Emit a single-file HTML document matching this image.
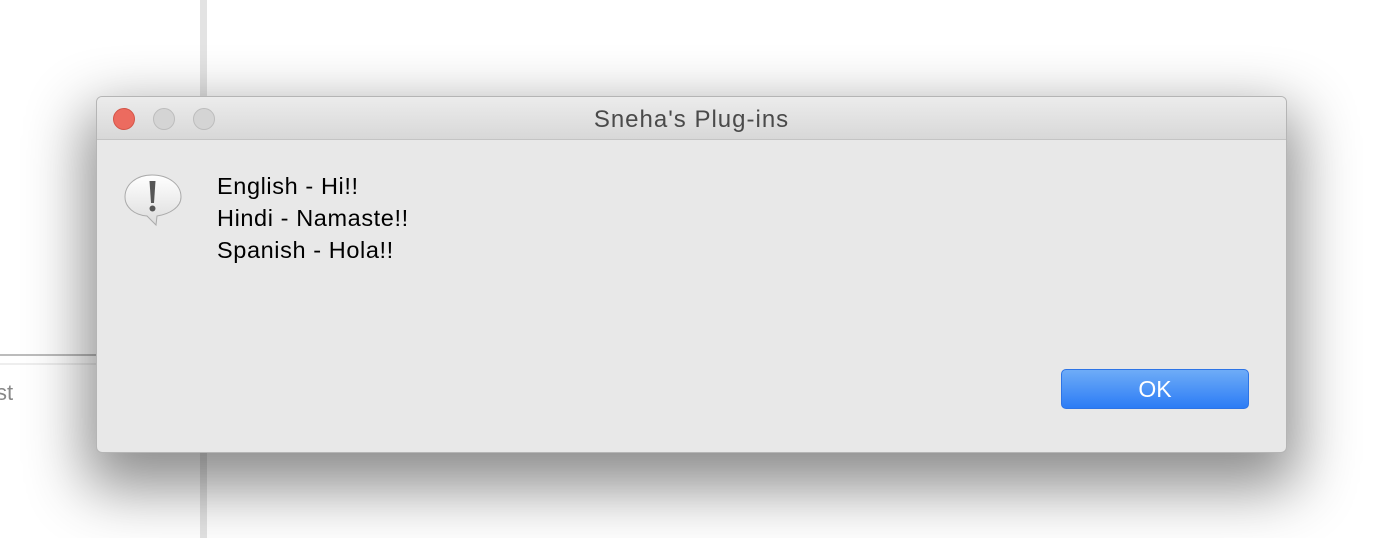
<!DOCTYPE html>
<html><head><style>
body{margin:0;width:1400px;height:538px;background:#fff;position:relative;overflow:hidden;font-family:"Liberation Sans",sans-serif}
.vl{position:absolute;left:200px;top:0;width:7px;height:538px;background:#e3e3e3}
.hl{position:absolute;left:0;top:354px;width:100px;height:2px;background:#bcbcbc}
.hl2{position:absolute;left:0;top:363px;width:100px;height:2px;background:#eee}
.st{position:absolute;left:-4px;top:380px;font-size:22px;color:#888}
.win{position:absolute;left:96px;top:96px;width:1189px;height:355px;background:#e8e8e8;border:1px solid #b5b5b5;border-radius:6px;box-shadow:0 25px 60px 10px rgba(0,0,0,.45);overflow:hidden}
.tb{height:42px;background:linear-gradient(#ececec,#d8d8d8);border-bottom:1px solid #c4c4c4;text-align:center;line-height:45px;font-size:24px;letter-spacing:1px;color:#4a4a4a}
.dot{position:absolute;top:11px;width:22px;height:22px;border-radius:50%;background:#d4d4d4;border:1px solid #bcbcbc;box-sizing:border-box}
.txt{position:absolute;left:120px;top:73px;font-size:23.5px;letter-spacing:.6px;line-height:32px;color:#000}
.ok{position:absolute;left:964px;top:272px;width:188px;height:40px;border-radius:5px;background:linear-gradient(#6eacf7,#2c7cf5);border:1px solid #2d74e6;box-sizing:border-box;color:#fff;text-align:center;line-height:38px;font-size:23px}
</style></head><body>
<div class="vl"></div><div class="hl"></div><div class="hl2"></div><div class="st">st</div>
<div class="win">
<div class="tb">Sneha's Plug-ins</div>
<div class="dot" style="left:16px;background:#ec6b5f;border-color:#d35447"></div>
<div class="dot" style="left:56px"></div>
<div class="dot" style="left:96px"></div>
<svg style="position:absolute;left:26px;top:76px" width="60" height="58" viewBox="0 0 60 58">
<defs><linearGradient id="g" x1="0" y1="0" x2="0" y2="1"><stop offset="0" stop-color="#fff"/><stop offset="1" stop-color="#dcdcdc"/></linearGradient></defs>
<path d="M29 2C14 2 2 11 2 24c0 10 9 18 22 19l9 9 1-9c13-2 24-9 24-19C58 11 45 2 29 2z" fill="url(#g)" stroke="#aaa" stroke-width="1"/>
<path d="M26.5 8h6l-1.5 22h-3z" fill="#555"/><circle cx="29.5" cy="35.5" r="3" fill="#555"/>
</svg>
<div class="txt">English - Hi!!<br>Hindi - Namaste!!<br>Spanish - Hola!!</div>
<div class="ok">OK</div>
</div>
</body></html>
